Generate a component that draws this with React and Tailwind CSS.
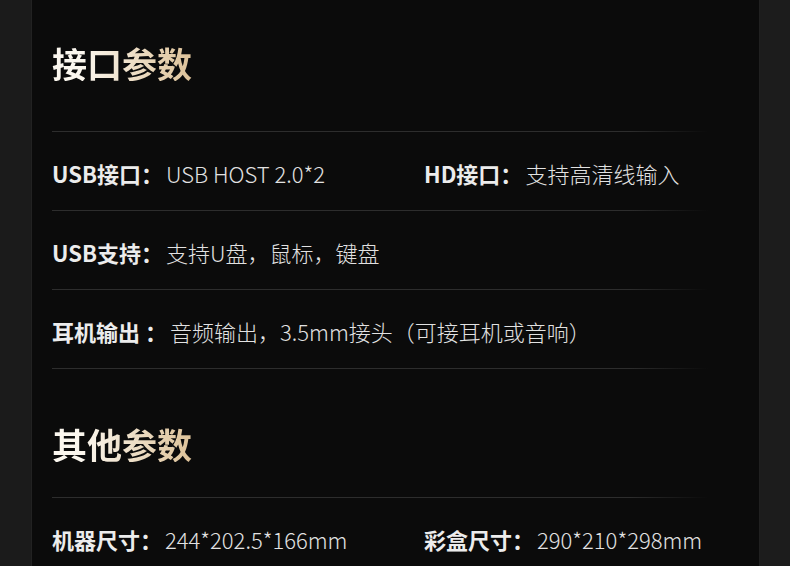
const font = { fontFamily: '"Noto Sans CJK SC", "Noto Sans", sans-serif' };

function Divider() {
  return <div className="h-px w-[656px] bg-linear-to-r from-[#2d2d2d] from-88% to-transparent" />;
}

function Item({ label, value }) {
  return (
    <div className="flex items-center whitespace-nowrap text-[22px]">
      <span className="font-bold text-[#ececec]">{label}</span>
      <span className="ml-[3px] font-light text-[#e2e2e2]">{value}</span>
    </div>
  );
}

function Row({ children }) {
  return <div className="flex h-[78px] items-center pt-[4px]">{children}</div>;
}

function Heading({ children }) {
  return (
    <h2 className="inline-block bg-linear-to-r from-[#fbf7ef] from-20% to-[#ddc299] bg-clip-text text-[35px] leading-[36px] font-bold text-transparent">
      {children}
    </h2>
  );
}

export default function App() {
  return (
    <div className="flex h-[566px] w-[790px] overflow-hidden bg-[#1b1b1b]" style={font}>
      <div className="w-[32px] shrink-0 border-r border-[#222]" />
      <div className="w-[727px] shrink-0 bg-[#0b0b0b] pl-[20px]">
        {/* 接口参数 */}
        <div className="pt-[45px] pb-[48px]">
          <Heading>接口参数</Heading>
        </div>
        <Divider />
        <Row>
          <div className="w-[372px]">
            <Item label="USB接口：" value="USB HOST 2.0*2" />
          </div>
          <Item label="HD接口：" value="支持高清线输入" />
        </Row>
        <Divider />
        <Row>
          <Item label="USB支持：" value="支持U盘，鼠标，键盘" />
        </Row>
        <Divider />
        <Row>
          <Item label="耳机输出 ：" value="音频输出，3.5mm接头（可接耳机或音响）" />
        </Row>
        <Divider />

        {/* 其他参数 */}
        <div className="pt-[57px] pb-[33px]">
          <Heading>其他参数</Heading>
        </div>
        <Divider />
        <Row>
          <div className="w-[372px]">
            <Item label="机器尺寸：" value="244*202.5*166mm" />
          </div>
          <Item label="彩盒尺寸：" value="290*210*298mm" />
        </Row>
      </div>
      <div className="flex-1 border-l border-[#202020] bg-[#1c1c1c]" />
    </div>
  );
}
